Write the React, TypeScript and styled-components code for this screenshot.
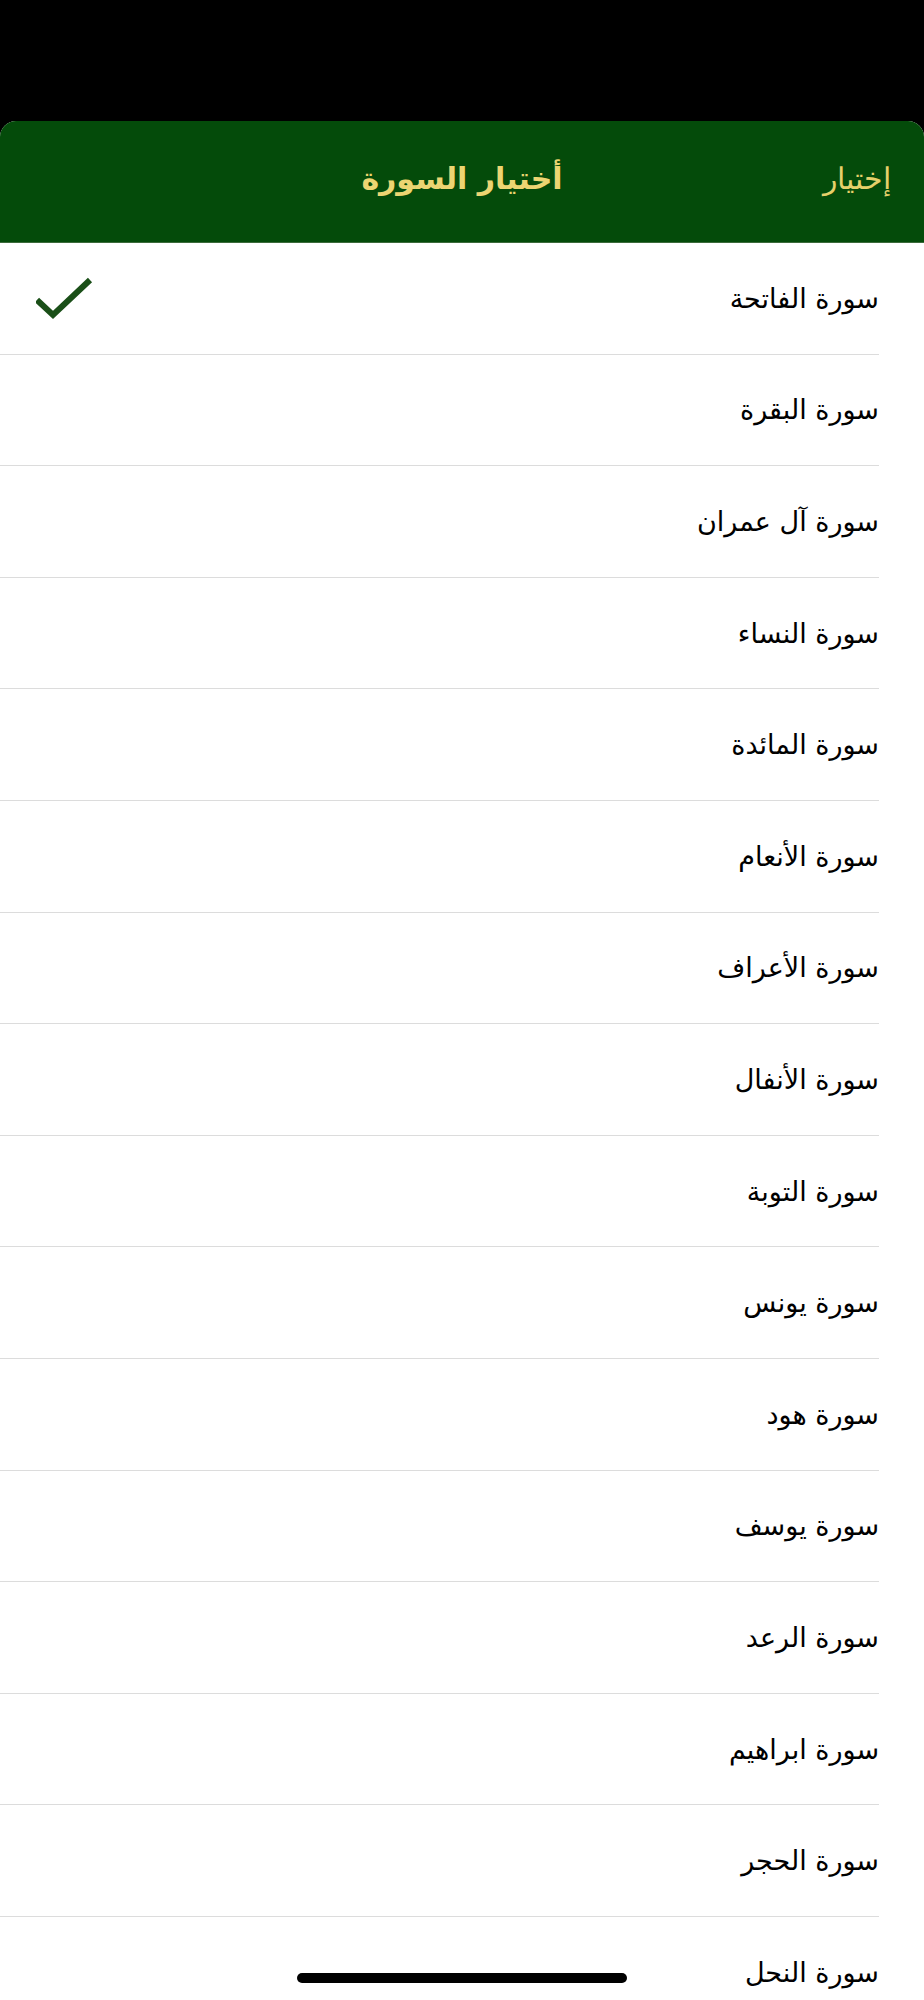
import styled, { createGlobalStyle } from "styled-components";

const surahs = [
  "سورة الفاتحة",
  "سورة البقرة",
  "سورة آل عمران",
  "سورة النساء",
  "سورة المائدة",
  "سورة الأنعام",
  "سورة الأعراف",
  "سورة الأنفال",
  "سورة التوبة",
  "سورة يونس",
  "سورة هود",
  "سورة يوسف",
  "سورة الرعد",
  "سورة ابراهيم",
  "سورة الحجر",
  "سورة النحل",
  "سورة الإسراء",
];

const GlobalStyle = createGlobalStyle`
  html, body {
    margin: 0;
    padding: 0;
    background: #000;
  }
  body {
    font-family: "DejaVu Sans", "Noto Sans", sans-serif;
    -webkit-font-smoothing: antialiased;
  }
`;

const App = () => {
  const selected = 0;

  return (
    <>
      <GlobalStyle />
      <Screen dir="rtl">
        <StatusArea />
        <Sheet>
          <Header>
            <DoneButton>إختيار</DoneButton>
            <Title>أختيار السورة</Title>
            <span />
          </Header>
          <List>
            {surahs.map((name, i) => (
              <Row key={name}>
                <RowInner>
                  <Name>{name}</Name>
                  {i === selected && (
                    <svg width="58" height="44" viewBox="0 0 58 44">
                      <polyline
                        points="1,24 17,39 54,4"
                        fill="none"
                        stroke="#1a4f18"
                        strokeWidth="6"
                      />
                    </svg>
                  )}
                </RowInner>
              </Row>
            ))}
          </List>
        </Sheet>
        <HomeIndicator />
      </Screen>
    </>
  );
};

const Screen = styled.div`
  position: relative;
  width: 924px;
  height: 2000px;
  overflow: hidden;
  background: #000;
`;

const StatusArea = styled.div`
  height: 121px;
`;

const Sheet = styled.div`
  background: #fff;
  border-radius: 16px 16px 0 0;
  overflow: hidden;
`;

const Header = styled.div`
  display: grid;
  grid-template-columns: 1fr auto 1fr;
  align-items: center;
  height: 122px;
  padding-bottom: 6px;
  background: #044b0a;
  border-bottom: 1px solid #3c6b3c;
  box-sizing: border-box;
`;

const DoneButton = styled.span`
  justify-self: start;
  padding-right: 33px;
  color: #e6d06a;
  font-family: "Liberation Serif", "DejaVu Serif", serif;
  font-size: 30px;
`;

const Title = styled.h1`
  margin: 0;
  color: #ecd572;
  font-family: "DejaVu Sans", sans-serif;
  font-weight: bold;
  font-size: 30px;
`;

const List = styled.div`
  background: #fff;
`;

const Row = styled.div`
  padding-right: 45px;
`;

const RowInner = styled.div`
  display: flex;
  align-items: center;
  justify-content: space-between;
  height: 110.6px;
  padding-left: 36px;
  border-bottom: 1px solid #dcdcdc;
`;

const Name = styled.span`
  color: #000;
  font-size: 27px;
`;

const HomeIndicator = styled.div`
  position: absolute;
  left: 297px;
  bottom: 17px;
  width: 330px;
  height: 10px;
  border-radius: 5px;
  background: #000;
`;

export default App;
